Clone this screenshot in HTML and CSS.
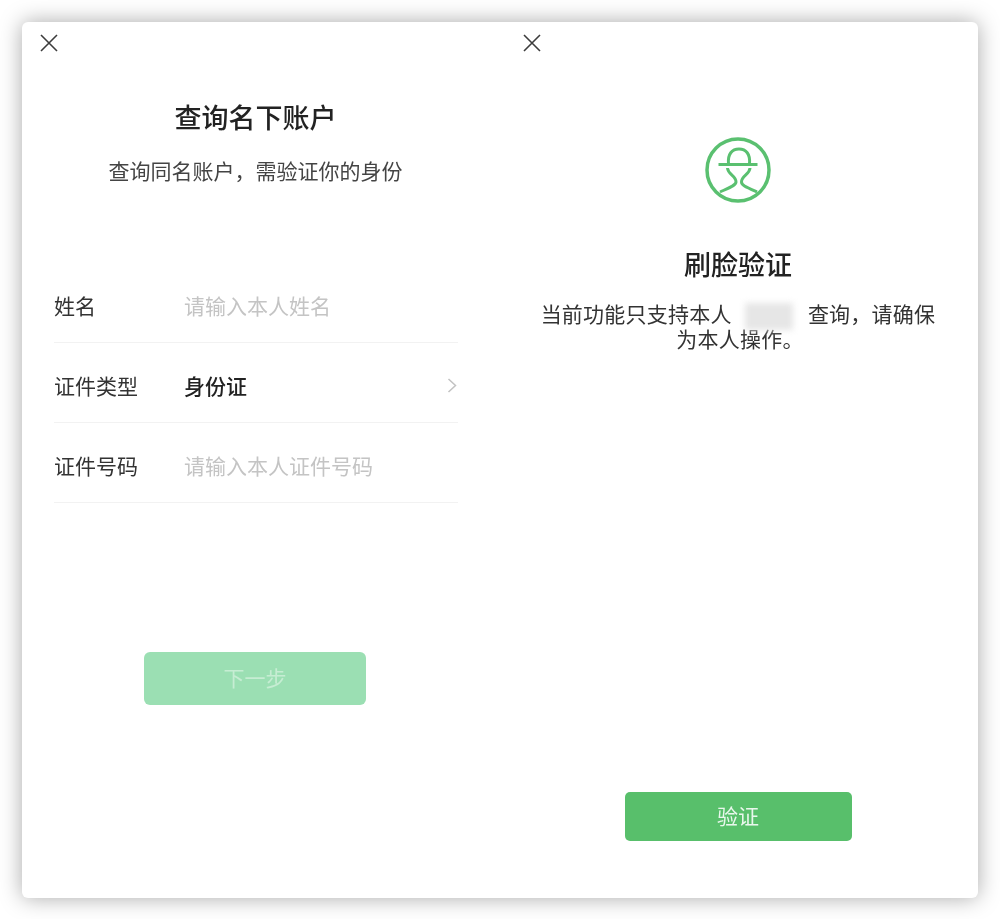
FILE: index.html
```html
<!DOCTYPE html>
<html lang="zh-CN">
<head>
    <meta charset="UTF-8">
    <meta name="viewport" content="width=device-width, initial-scale=1.0">
    <title>查询名下账户</title>
    <link rel="stylesheet" href="styles.css">
</head>
<body>
    <div class="window">
        <div class="panel">
            <svg class="close-icon" viewBox="0 0 18 18"><path d="M1 1L17 17M17 1L1 17"/></svg>
            <h2 class="title title-query">查询名下账户</h2>
            <p class="subtitle">查询同名账户，需验证你的身份</p>
            <div class="form">
                <div class="form-row">
                    <span class="form-label">姓名</span>
                    <span class="form-placeholder">请输入本人姓名</span>
                </div>
                <div class="form-row">
                    <span class="form-label">证件类型</span>
                    <span class="form-value">身份证</span>
                    <svg class="chevron" viewBox="0 0 10 15"><path d="M1.5 1L8.5 7.5L1.5 14"/></svg>
                </div>
                <div class="form-row">
                    <span class="form-label">证件号码</span>
                    <span class="form-placeholder">请输入本人证件号码</span>
                </div>
            </div>
            <button class="button button-disabled">下一步</button>
        </div>
        <div class="panel">
            <svg class="close-icon" viewBox="0 0 18 18"><path d="M1 1L17 17M17 1L1 17"/></svg>
            <svg class="face-logo" viewBox="0 0 66 66">
                <circle cx="33" cy="33" r="31"/>
                <path class="brim" d="M13.500 27.500H52.500"/>
                <path d="M23.500 27C22.500 17 27 12 34 12C41 12 45.500 17 44.500 27"/>
                <path d="M22.500 31C23 38 31 38.500 31 45C31 48 27 49.500 15 55"/>
                <path d="M45 31C44.500 38 36.500 38.500 36.500 45C36.500 48 40 49.500 52 55"/>
            </svg>
            <h2 class="title title-face">刷脸验证</h2>
            <p class="notice">当前功能只支持本人<span class="masked-name"></span>查询，请确保<br><span class="notice-end">为本人操作。</span></p>
            <button class="button button-verify">验证</button>
        </div>
    </div>
</body>
</html>
```

FILE: styles.css
```css
body {
    font-family: "Liberation Sans", "Noto Sans CJK SC", sans-serif;
    display: flex;
    justify-content: center;
    align-items: center;
    height: 919px;
    margin: 0;
    background-color: #fff;
    overflow: hidden;
}

.window {
    display: flex;
    gap: 17px;
    width: 956px;
    height: 876px;
    background-color: #fff;
    border-radius: 6px;
    box-shadow: 0 0 22px rgba(0, 0, 0, 0.34);
}

.panel {
    display: flex;
    flex-direction: column;
    align-items: center;
    width: 466px;
    padding-top: 12px;
    box-sizing: border-box;
    filter: blur(0.5px);
}

.close-icon {
    align-self: flex-start;
    width: 18px;
    height: 18px;
    margin-left: 18px;
    flex: none;
}

.close-icon path {
    fill: none;
    stroke: #3c3c3c;
    stroke-width: 1.6;
}

.title {
    margin: 0;
    font-size: 27px;
    font-weight: 500;
    line-height: 36px;
    color: #222;
}

.title-query {
    margin-top: 49px;
    margin-left: 1px;
}

.title-face {
    margin-top: 45px;
}

.subtitle {
    margin: 20px 0 0 1px;
    font-size: 21px;
    line-height: 30px;
    color: #444;
}

.form {
    width: 404px;
    margin-top: 85px;
    margin-left: 2px;
}

.form-row {
    display: flex;
    align-items: center;
    height: 71px;
    margin-bottom: 9px;
    padding-bottom: 3px;
    border-bottom: 1px solid #f2f2f2;
    box-sizing: border-box;
    font-size: 21px;
}

.form-label {
    width: 130px;
    color: #333;
}

.form-placeholder {
    color: #c4c4c4;
}

.form-value {
    flex: 1;
    font-weight: 500;
    color: #222;
}

.chevron {
    width: 10px;
    height: 15px;
    margin-right: 1px;
}

.chevron path {
    fill: none;
    stroke: #c2c2c2;
    stroke-width: 1.5;
}

.button {
    padding: 0 0 2px;
    border: none;
    font-family: inherit;
    font-size: 21px;
    color: #fff;
}

.button-disabled {
    width: 222px;
    height: 53px;
    margin-top: 140px;
    border-radius: 6px;
    background-color: #9bdfb3;
    color: #c6edd3;
}

.button-verify {
    width: 227px;
    height: 49px;
    margin-top: auto;
    margin-bottom: 57px;
    border-radius: 5px;
    background-color: #58bf6b;
    color: #e9f7ec;
}

.face-logo {
    width: 66px;
    height: 66px;
    margin-top: 85px;
    flex: none;
}

.face-logo circle,
.face-logo path {
    fill: none;
    stroke: #5ac070;
    stroke-width: 3.5;
}

.face-logo path {
    stroke-width: 3;
}

.notice {
    margin: 18px 0 0;
    font-size: 21px;
    line-height: 25px;
    letter-spacing: 0.25px;
    text-align: center;
    color: #333;
}

.notice-end {
    padding-left: 4px;
}

.masked-name {
    display: inline-block;
    width: 48px;
    height: 27px;
    margin: -3px 15px -3px 13px;
    vertical-align: -5px;
    background-color: #e6e6e6;
    filter: blur(3px);
}
```
